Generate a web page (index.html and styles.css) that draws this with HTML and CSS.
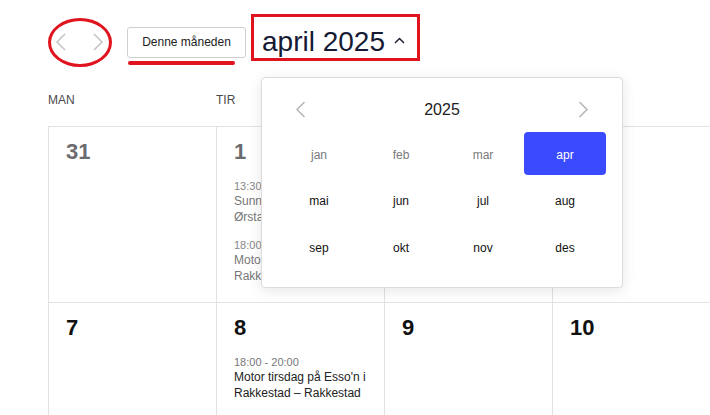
FILE: index.html
```html
<!DOCTYPE html>
<html lang="no">
<head>
<meta charset="utf-8">
<title>Kalender</title>
<link rel="stylesheet" href="styles.css">
</head>
<body>
<div class="page">
  <div class="toolbar">
    <div class="nav">
      <button class="nav-btn" aria-label="Forrige">
        <svg width="12" height="18" viewBox="0 0 12 18"><path d="M10 1 L2 9 L10 17" fill="none" stroke="#c4c4c4" stroke-width="1.6"/></svg>
      </button>
      <button class="nav-btn" aria-label="Neste">
        <svg width="12" height="18" viewBox="0 0 12 18"><path d="M2 1 L10 9 L2 17" fill="none" stroke="#c4c4c4" stroke-width="1.6"/></svg>
      </button>
    </div>
    <button class="today-btn">Denne måneden</button>
    <div class="title">april 2025
      <svg class="title-caret" width="11" height="7" viewBox="0 0 11 7"><path d="M1 6 L5.5 1.5 L10 6" fill="none" stroke="#1f2233" stroke-width="1.5"/></svg>
    </div>
  </div>

  <div class="weekdays">
    <div class="wd">MAN</div>
    <div class="wd">TIR</div>
    <div class="wd"></div>
    <div class="wd"></div>
  </div>

  <div class="grid">
    <div class="cell past"><div class="day">31</div></div>
    <div class="cell past">
      <div class="day">1</div>
      <div class="event">
        <div class="time">13:30</div>
        <div class="ev-title">Sunn<br>Ørsta</div>
      </div>
      <div class="event">
        <div class="time">18:00</div>
        <div class="ev-title">Moto<br>Rakk</div>
      </div>
    </div>
    <div class="cell past"></div>
    <div class="cell past"></div>

    <div class="cell"><div class="day">7</div></div>
    <div class="cell">
      <div class="day">8</div>
      <div class="event">
        <div class="time">18:00 - 20:00</div>
        <div class="ev-title">Motor tirsdag på Esso'n i<br>Rakkestad – Rakkestad</div>
      </div>
    </div>
    <div class="cell"><div class="day">9</div></div>
    <div class="cell"><div class="day">10</div></div>
  </div>

  <div class="picker">
    <div class="picker-head">
      <svg width="11" height="17" viewBox="0 0 11 17"><path d="M9.5 1 L2 8.5 L9.5 16" fill="none" stroke="#b5b5b5" stroke-width="1.5"/></svg>
      <span class="picker-year">2025</span>
      <svg width="11" height="17" viewBox="0 0 11 17"><path d="M1.5 1 L9 8.5 L1.5 16" fill="none" stroke="#b5b5b5" stroke-width="1.5"/></svg>
    </div>
    <div class="months">
      <div class="m muted">jan</div>
      <div class="m muted">feb</div>
      <div class="m muted">mar</div>
      <div class="m active">apr</div>
      <div class="m">mai</div>
      <div class="m">jun</div>
      <div class="m">jul</div>
      <div class="m">aug</div>
      <div class="m">sep</div>
      <div class="m">okt</div>
      <div class="m">nov</div>
      <div class="m">des</div>
    </div>
  </div>

  <div class="mark mark-ellipse"></div>
  <div class="mark mark-underline"></div>
  <div class="mark mark-rect"></div>
</div>
</body>
</html>
```

FILE: styles.css
```css
* { box-sizing: border-box; }
html, body {
  margin: 0;
  padding: 0;
  background: #fff;
  font-family: "Liberation Sans", Arial, sans-serif;
  color: #222;
}
.page {
  position: relative;
  width: 710px;
  height: 415px;
  overflow: hidden;
  padding: 18px 0 0 48px;
}
.toolbar {
  display: flex;
  align-items: center;
  height: 48px;
}
.nav {
  display: flex;
  align-items: center;
  gap: 25px;
  padding-left: 7px;
  margin-right: 23px;
}
.nav-btn {
  border: 0;
  background: none;
  padding: 0;
  width: 12px;
  height: 18px;
  display: flex;
}
.today-btn {
  width: 119px;
  height: 31px;
  border: 1px solid #cfcfcf;
  border-radius: 3px;
  background: #fff;
  font-family: "Liberation Sans", Arial, sans-serif;
  font-size: 12px;
  color: #222;
  padding: 0;
  margin-right: 16px;
}
.title {
  display: flex;
  align-items: center;
  font-size: 28px;
  color: #161a33;
  line-height: 32px;
}
.title-caret {
  margin-left: 9px;
  margin-top: -4px;
}
.weekdays {
  display: grid;
  grid-template-columns: 168px 168px 168px 1fr;
  height: 60px;
  padding-top: 27px;
}
.wd {
  font-size: 12px;
  line-height: 14px;
  color: #4a4a4a;
}
.grid {
  display: grid;
  grid-template-columns: 168px 168px 168px 1fr;
  grid-auto-rows: 176px;
  border-top: 1px solid #e2e2e2;
}
.cell {
  border-left: 1px solid #e2e2e2;
  border-bottom: 1px solid #e2e2e2;
  padding: 12px 17px;
}
.day {
  font-size: 22px;
  font-weight: bold;
  line-height: 26px;
  color: #111;
}
.past .day { color: #6b6b70; }
.event { margin-top: 14px; }
.event + .event { margin-top: 13px; }
.time {
  font-size: 11px;
  line-height: 14px;
  color: #777;
}
.ev-title {
  font-size: 12px;
  line-height: 16px;
  color: #222;
}
.past .ev-title { color: #777; }
.past .time { color: #888; }

.picker {
  position: absolute;
  left: 261px;
  top: 77px;
  width: 362px;
  height: 211px;
  background: #fff;
  border: 1px solid #dcdcdc;
  border-radius: 4px;
  box-shadow: 0 3px 14px rgba(0, 0, 0, 0.10);
  padding: 11px 16px 0 16px;
}
.picker-head {
  height: 43px;
  display: flex;
  align-items: center;
  justify-content: space-between;
  padding: 0 17px 2px 17px;
}
.picker-year {
  font-size: 16px;
  color: #222;
}
.months {
  display: grid;
  grid-template-columns: repeat(4, 1fr);
  grid-auto-rows: 43px;
  row-gap: 3.5px;
}
.m {
  display: flex;
  align-items: center;
  justify-content: center;
  font-size: 12px;
  color: #111;
  border-radius: 4px;
  padding-top: 2px;
}
.m.muted { color: #7a7a7a; }
.m.active {
  background: #3a4bff;
  color: #fff;
}

.mark {
  position: absolute;
  pointer-events: none;
}
.mark-ellipse {
  left: 48px;
  top: 18px;
  width: 64px;
  height: 49px;
  border: 3px solid #e0141e;
  border-radius: 50%;
}
.mark-underline {
  left: 128px;
  top: 61px;
  width: 107px;
  height: 4px;
  border-radius: 2px;
  background: #e0141e;
}
.mark-rect {
  left: 251px;
  top: 14px;
  width: 169px;
  height: 47px;
  border: 3.5px solid #e0141e;
}
```
